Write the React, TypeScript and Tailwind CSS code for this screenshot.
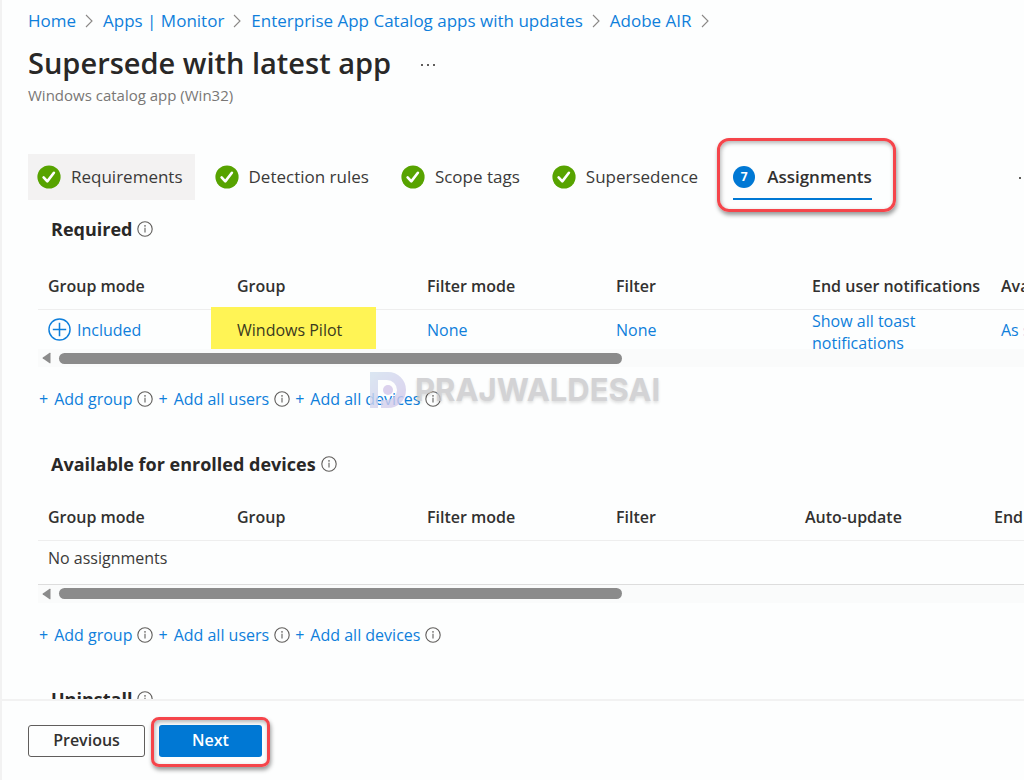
import type { ReactNode } from "react";

const steps = ["Requirements", "Detection rules", "Scope tags", "Supersedence"];

const crumbs = [
  "Home",
  "Apps | Monitor",
  "Enterprise App Catalog apps with updates",
  "Adobe AIR",
];

const InfoIcon = () => (
  <svg viewBox="0 0 16 16" className="size-4 shrink-0" fill="none" aria-hidden="true">
    <circle cx="8" cy="8" r="7.2" stroke="#605e5c" strokeWidth="1.1" />
    <path d="M8 6.800v4.600" stroke="#605e5c" strokeWidth="1.1" />
    <circle cx="8" cy="4.9" r="0.8" fill="#605e5c" />
  </svg>
);

const CheckIcon = () => (
  <svg viewBox="0 0 24 24" className="size-6 shrink-0" fill="none" aria-hidden="true">
    <circle cx="12" cy="12" r="11.6" fill="#57a300" />
    <path
      d="M6.600 12.400l3.700 4 6.600-8.600"
      stroke="#fff"
      strokeWidth="2.6"
      strokeLinecap="round"
      strokeLinejoin="round"
    />
  </svg>
);

const Chevron = () => (
  <svg viewBox="0 0 8 14" className="h-3.5 w-2" fill="none" aria-hidden="true">
    <path d="M1 1l6 6-6 6" stroke="#8a8886" strokeWidth="1.1" />
  </svg>
);

const Scrollbar = () => (
  <div className="flex h-[18px] items-center bg-[#fafbfb] pl-1" aria-hidden="true">
    <svg viewBox="0 0 9 12" className="mr-2 h-3 w-[9px]">
      <path d="M8.500 1.200v9.600q0 .8-.8.4L.8 6.600q-.7-.6 0-1.200L7.700.8q.8-.4.8.4z" fill="#8b8b8b" />
    </svg>
    <div className="flex-1">
      <div className="h-[11px] w-7/12 rounded-full bg-[#8b8b8b]" />
    </div>
  </div>
);

const AssignmentActions = () => (
  <div className="flex h-6 items-center gap-[5px] pl-px text-[#0f7fdb]">
    {["Add group", "Add all users", "Add all devices"].map((label) => (
      <div key={label} className="flex items-center gap-[5px]">
        <button type="button" className="flex gap-[6px] whitespace-nowrap">
          <span>+</span>
          {label}
        </button>
        <InfoIcon />
      </div>
    ))}
  </div>
);

const SectionTitle = ({ children }: { children: ReactNode }) => (
  <h2 className="flex h-7 items-center gap-[5px] pl-[13px] text-lg font-bold text-[#292827]">
    {children}
    <InfoIcon />
  </h2>
);

const Watermark = () => (
  <div
    className="pointer-events-none absolute top-[370px] left-[367px] flex items-center gap-2 opacity-80"
    aria-hidden="true"
  >
    <svg viewBox="0 0 38 40" className="h-10 w-[38px]">
      <defs>
        <linearGradient id="mark" x1="0" y1="0" x2="1" y2="1">
          <stop offset="0" stopColor="#d3e2f0" />
          <stop offset="1" stopColor="#d3c6ea" />
        </linearGradient>
      </defs>
      <path
        fillRule="evenodd"
        d="M1 2h18a18 18 0 0 1 0 36h-7v-8h6a10 10 0 0 0 0-20H9v28H1z"
        fill="url(#mark)"
      />
      <circle cx="19" cy="20" r="5" fill="#d3c6ea" />
    </svg>
    <span className="font-[Inter] text-[31px] leading-10 font-bold text-[#c9c9cb] [text-shadow:0_2px_3px_rgba(0,0,0,0.15)]">
      PRAJWALDESAI
    </span>
  </div>
);

const Columns = ({ filterWidth }: { filterWidth: string }) => (
  <colgroup>
    <col className="w-[189px]" />
    <col className="w-[190px]" />
    <col className="w-[189px]" />
    <col className={filterWidth} />
    <col className="w-[189px]" />
    <col className="w-[189px]" />
  </colgroup>
);

const HeadRow = ({ names }: { names: string[] }) => (
  <thead>
    <tr className="h-[46px] border-b border-[#eeeeee] text-[#323130]">
      {names.map((name) => (
        <th key={name} scope="col" className="px-[10px] text-left font-semibold whitespace-nowrap">
          {name}
        </th>
      ))}
    </tr>
  </thead>
);

const App = () => {
  return (
    <div className="relative flex h-screen flex-col overflow-hidden border-l-2 border-[#f2f2f2] bg-[#fdfefe] font-['Open_Sans','Noto_Sans',sans-serif] text-base text-[#3b3a39]">
      <header className="pt-[9px] pl-[26px]">
        <nav aria-label="Breadcrumb">
          <ol className="flex h-6 items-center gap-[10px] text-[17px] whitespace-nowrap">
            {crumbs.map((crumb) => (
              <li key={crumb} className="flex items-center gap-[9px]">
                <a href="#" className="text-[#0f7fdb]">
                  {crumb}
                </a>
                <Chevron />
              </li>
            ))}
          </ol>
        </nav>
        <div className="mt-2 flex h-11 items-center gap-[30px]">
          <h1 className="text-[29px] font-semibold whitespace-nowrap text-[#292827]">
            Supersede with latest app
          </h1>
          <button type="button" aria-label="More" className="flex gap-1 pt-1">
            <span className="size-[2px] bg-[#605e5c]" />
            <span className="size-[2px] bg-[#605e5c]" />
            <span className="size-[2px] bg-[#605e5c]" />
          </button>
        </div>
        <p className="text-[15px] leading-5 text-[#797775]">Windows catalog app (Win32)</p>
      </header>

      <div className="mt-[49px] flex items-start justify-between pl-[26px]">
        <div role="tablist" className="flex gap-[11px] text-[17px]">
          {steps.map((step, i) => (
            <button
              key={step}
              type="button"
              role="tab"
              aria-selected={false}
              className={`flex h-[46px] items-center gap-[10px] pr-3 pl-[9px] whitespace-nowrap ${
                i === 0 ? "bg-[#f3f2f2]" : ""
              }`}
            >
              <CheckIcon />
              {step}
            </button>
          ))}
          <div className="relative ml-3">
            <button
              type="button"
              role="tab"
              aria-selected={true}
              className="flex h-[46px] items-center gap-3 border-b-2 border-[#0078d4] pt-[2px] font-semibold whitespace-nowrap text-[#323130]"
            >
              <span className="flex size-[22px] items-center justify-center rounded-full bg-[#0078d4] text-xs font-bold text-white">
                7
              </span>
              Assignments
            </button>
            <div className="pointer-events-none absolute -top-4 -right-6 -bottom-3 -left-4 rounded-xl border-3 border-[#f5454b] shadow-[1px_3px_4px_rgba(0,0,0,0.4),inset_1px_2px_4px_rgba(0,0,0,0.3)]" />
          </div>
        </div>
        <span className="mt-[23px] mr-[3px] size-[2px] shrink-0 bg-[#605e5c]" />
      </div>

      <main className="min-h-0 flex-1 overflow-hidden pl-9">
        <div className="pt-[15px]">
          <SectionTitle>Required</SectionTitle>
        </div>
        <div className="mt-5 h-[86px] overflow-hidden">
          <table className="w-[1142px] table-fixed border-collapse">
            <Columns filterWidth="w-[196px]" />
            <HeadRow
              names={[
                "Group mode",
                "Group",
                "Filter mode",
                "Filter",
                "End user notifications",
                "Availability",
              ]}
            />
            <tbody>
              <tr className="h-10 border-b border-[#eeeeee]">
                <td className="px-[10px]">
                  <a href="#" className="flex items-center gap-[6px] text-[#0f7fdb]">
                    <svg viewBox="0 0 24 24" className="size-[23px]" fill="none" aria-hidden="true">
                      <circle cx="12" cy="12" r="11" stroke="currentColor" strokeWidth="1.5" />
                      <path d="M12 5v14M5 12h14" stroke="currentColor" strokeWidth="1.6" />
                    </svg>
                    Included
                  </a>
                </td>
                <td className="relative px-[10px]">
                  <span className="absolute -top-[3px] -bottom-[2px] -left-4 w-[165px] bg-[#fff455]" />
                  <span className="relative text-[#3b3a20]">Windows Pilot</span>
                </td>
                <td className="px-[10px]">
                  <a href="#" className="text-[#0f7fdb]">None</a>
                </td>
                <td className="px-[10px]">
                  <a href="#" className="text-[#0f7fdb]">None</a>
                </td>
                <td className="px-[10px]">
                  <div className="h-10">
                    <a href="#" className="block leading-[22px] text-[#0f7fdb]">
                      Show all toast notifications
                    </a>
                  </div>
                </td>
                <td className="px-[10px] whitespace-nowrap">
                  <a href="#" className="text-[#0f7fdb]">As soon as possible</a>
                </td>
              </tr>
            </tbody>
          </table>
        </div>
        <Scrollbar />
        <div className="mt-5">
          <AssignmentActions />
        </div>

        <div className="mt-[39px]">
          <SectionTitle>Available for enrolled devices</SectionTitle>
        </div>
        <div className="mt-4 overflow-hidden">
          <table className="w-[1135px] table-fixed border-collapse">
            <Columns filterWidth="w-[189px]" />
            <HeadRow
              names={[
                "Group mode",
                "Group",
                "Filter mode",
                "Filter",
                "Auto-update",
                "End user notifications",
              ]}
            />
            <tbody>
              <tr className="h-11 border-b border-[#dddddd]">
                <td colSpan={6} className="px-[10px] pb-2">
                  No assignments
                </td>
              </tr>
            </tbody>
          </table>
        </div>
        <Scrollbar />
        <div className="mt-5">
          <AssignmentActions />
        </div>

        <div className="mt-[38px]">
          <SectionTitle>Uninstall</SectionTitle>
        </div>
      </main>

      <footer className="flex h-[81px] shrink-0 items-start gap-[14px] border-t-2 border-[#f2f2f2] pt-6 pl-[26px] font-semibold">
        <button
          type="button"
          className="h-8 w-[117px] rounded-[3px] border border-[#605e5c] bg-[#fdfefe] pb-[2px] text-[#323130]"
        >
          Previous
        </button>
        <div className="relative">
          <button
            type="button"
            className="h-8 w-[103px] rounded-[3px] bg-[#0078d4] pb-[2px] text-white"
          >
            Next
          </button>
          <div className="pointer-events-none absolute -inset-x-2 -top-2 -bottom-[10px] rounded-lg border-3 border-[#f5454b] shadow-[1px_3px_4px_rgba(0,0,0,0.4),inset_1px_2px_4px_rgba(0,0,0,0.3)]" />
        </div>
      </footer>
      <Watermark />
    </div>
  );
};

export default App;
